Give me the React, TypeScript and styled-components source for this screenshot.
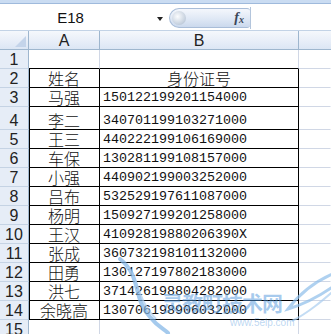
import React from "react";
import styled, { createGlobalStyle } from "styled-components";

const GlobalStyle = createGlobalStyle`
  html, body {
    margin: 0;
    padding: 0;
    background: #ffffff;
  }
  body {
    font-family: "Liberation Sans", Arial, sans-serif;
    overflow: hidden;
  }
`;

type Person = { name: string; id: string };

const people: Person[] = [
  { name: "马强", id: "150122199201154000" },
  { name: "李二", id: "340701199103271000" },
  { name: "王三", id: "440222199106169000" },
  { name: "车保", id: "130281199108157000" },
  { name: "小强", id: "440902199003252000" },
  { name: "吕布", id: "532529197611087000" },
  { name: "杨明", id: "150927199201258000" },
  { name: "王汉", id: "41092819880206390X" },
  { name: "张成", id: "360732198101132000" },
  { name: "田勇", id: "130127197802183000" },
  { name: "洪七", id: "371426198804282000" },
  { name: "余晓高", id: "130706198906032000" },
];

// row heights, row 4 is a bit taller as in the sheet
const rowHeight = (n: number) => (n === 4 ? 23 : 19);

const App: React.FC = () => {
  const rows: { n: number; name?: string; id?: string; boxed: boolean; top: boolean }[] = [];
  rows.push({ n: 1, boxed: false, top: true });
  rows.push({ n: 2, name: "姓名", id: "身份证号", boxed: true, top: false });
  people.forEach((p, i) => rows.push({ n: i + 3, name: p.name, id: p.id, boxed: true, top: false }));
  rows.push({ n: 15, boxed: false, top: false });

  return (
    <Window>
      <GlobalStyle />
      <RibbonEdge />
      <FormulaBar>
        <NameBox>
          <NameText>E18</NameText>
          <DropArrow />
        </NameBox>
        <FxButton>
          <FxKnob />
          <FxLabel>
            f<sub>x</sub>
          </FxLabel>
        </FxButton>
        <FormulaInput />
      </FormulaBar>
      <BarGap />
      <Sheet>
        <Corner>
          <CornerTriangle />
        </Corner>
        <ColHeader>A</ColHeader>
        <ColHeader>B</ColHeader>
        <ColHeader $last />
        {rows.map((r) => (
          <React.Fragment key={r.n}>
            <RowHeader style={{ height: rowHeight(r.n) }}>{r.n}</RowHeader>
            <Cell $boxed={r.boxed} $top={r.top} $left $align="center">
              {r.name && <NameValue>{r.name}</NameValue>}
            </Cell>
            <Cell $boxed={r.boxed} $top={r.top} $align={r.n === 2 ? "center" : "left"}>
              {r.id &&
                (r.n === 2 ? <NameValue>{r.id}</NameValue> : <IdValue>{r.id}</IdValue>)}
            </Cell>
            <Cell $last />
          </React.Fragment>
        ))}
        <Watermark>
          <svg width="230" height="80" viewBox="0 0 230 80">
            <path
              d="M8 2 C 30 20, 20 40, 38 60 C 46 70, 52 72, 56 76"
              fill="none"
              stroke="#7fb4e6"
              strokeWidth="4"
              strokeLinecap="round"
              opacity="0.7"
            />
            <path
              d="M16 10 C 28 26, 26 44, 44 62"
              fill="none"
              stroke="#a9cdef"
              strokeWidth="2"
              opacity="0.7"
            />
            <path
              d="M228 14 C 206 22, 188 36, 176 52 C 196 46, 210 38, 226 26"
              fill="none"
              stroke="#8dbde9"
              strokeWidth="3"
              opacity="0.7"
            />
            <path
              d="M226 30 C 210 44, 196 56, 180 64"
              fill="none"
              stroke="#a9cdef"
              strokeWidth="2"
              opacity="0.7"
            />
          </svg>
          <WatermarkText>灵教町技术网</WatermarkText>
          <WatermarkUrl>www.5elp.com</WatermarkUrl>
        </Watermark>
      </Sheet>
    </Window>
  );
};

export default App;

const Window = styled.div`
  width: 331px;
  height: 334px;
  overflow: hidden;
  background: #ffffff;
`;

const RibbonEdge = styled.div`
  height: 3px;
  background: #cadcf2;
  border-bottom: 1px solid #9fbadc;
`;

const FormulaBar = styled.div`
  display: flex;
  align-items: center;
  height: 25px;
  background: #ffffff;
  padding-top: 1px;
`;

const NameBox = styled.div`
  position: relative;
  width: 169px;
  height: 22px;
  display: flex;
  align-items: center;
  justify-content: center;
`;

const NameText = styled.span`
  font-size: 15px;
  color: #111;
  margin-left: -28px;
`;

const DropArrow = styled.span`
  position: absolute;
  right: 6px;
  top: 10px;
  width: 0;
  height: 0;
  border-left: 3px solid transparent;
  border-right: 3px solid transparent;
  border-top: 4px solid #222;
`;

const FxButton = styled.div`
  position: relative;
  width: 81px;
  height: 20px;
  border-radius: 10px 3px 3px 10px;
  border: 1px solid #a9bdd8;
  border-right: none;
  background: linear-gradient(#f4f7fc, #dfe8f5 55%, #cbd9ed);
  box-sizing: border-box;
  display: flex;
  align-items: center;
  justify-content: flex-end;
  padding-right: 6px;
`;

const FxKnob = styled.span`
  position: absolute;
  left: 2px;
  top: 2px;
  width: 14px;
  height: 14px;
  border-radius: 50%;
  background: radial-gradient(circle at 40% 40%, #ffffff, #c8d2de 60%, #9fb0c4);
  opacity: 0.85;
`;

const FxLabel = styled.span`
  font-family: "Liberation Serif", "Times New Roman", serif;
  font-style: italic;
  font-weight: 700;
  font-size: 14px;
  color: #3a4658;
  sub {
    font-size: 10px;
    vertical-align: -1px;
  }
`;

const FormulaInput = styled.div`
  flex: 1;
  height: 22px;
  border-left: 1px solid #b3c5dc;
  background: #ffffff;
`;

const BarGap = styled.div`
  height: 1px;
  background: #c3d3e6;
`;

const Sheet = styled.div`
  position: relative;
  display: grid;
  grid-template-columns: 29px 71px 199px 32px;
  grid-auto-rows: auto;
`;

const headerBg = "linear-gradient(#f5f8fc, #e8eef8 55%, #dce6f4)";

const Corner = styled.div`
  position: relative;
  height: 19px;
  box-sizing: border-box;
  background: ${headerBg};
  border-right: 1px solid #9eb6ce;
  border-bottom: 1px solid #9eb6ce;
`;

const CornerTriangle = styled.span`
  position: absolute;
  right: 2px;
  bottom: 2px;
  width: 0;
  height: 0;
  border-left: 11px solid transparent;
  border-bottom: 11px solid #c4d4ea;
`;

const ColHeader = styled.div<{ $last?: boolean }>`
  height: 19px;
  box-sizing: border-box;
  background: ${headerBg};
  border-right: ${(p) => (p.$last ? "none" : "1px solid #9eb6ce")};
  border-bottom: 1px solid #9eb6ce;
  display: flex;
  align-items: center;
  justify-content: center;
  font-size: 16px;
  color: #222;
  padding-top: 1px;
`;

const RowHeader = styled.div`
  box-sizing: border-box;
  background: #e6edf7;
  border-right: 1px solid #9eb6ce;
  border-bottom: 1px solid #c5d3e4;
  display: flex;
  align-items: flex-end;
  justify-content: center;
  font-size: 16px;
  line-height: 17px;
  color: #222;
`;

const Cell = styled.div<{
  $boxed?: boolean;
  $top?: boolean;
  $left?: boolean;
  $last?: boolean;
  $align?: "left" | "center";
}>`
  box-sizing: border-box;
  background: #ffffff;
  border-right: 1px solid
    ${(p) => (p.$boxed ? "#000" : p.$last ? "transparent" : "#d0d7e5")};
  border-bottom: 1px solid ${(p) => (p.$boxed || p.$top ? "#000" : "#d0d7e5")};
  box-shadow: ${(p) => (p.$boxed && p.$left ? "inset 1px 0 0 #000" : "none")};
  display: flex;
  align-items: flex-end;
  justify-content: ${(p) => (p.$align === "center" ? "center" : "flex-start")};
  padding-left: ${(p) => (p.$align === "left" ? "3px" : "0")};
  padding-bottom: 1px;
  white-space: nowrap;
`;

const NameValue = styled.span`
  display: block;
  font-family: "Noto Sans CJK SC", "Noto Sans", sans-serif;
  font-weight: 300;
  font-size: 16px;
  line-height: 16px;
  color: #111;
`;

const IdValue = styled.span`
  display: block;
  font-family: "Liberation Mono", "Courier New", monospace;
  font-size: 13.33px;
  line-height: 15px;
  color: #111;
`;

const Watermark = styled.div`
  position: absolute;
  left: 112px;
  top: 226px;
  width: 220px;
  height: 80px;
  pointer-events: none;
  svg {
    position: absolute;
    left: 0;
    top: 0;
  }
`;

const WatermarkText = styled.span`
  position: absolute;
  left: 50px;
  top: 30px;
  font-family: "Noto Sans CJK SC", sans-serif;
  font-size: 21px;
  font-weight: 700;
  letter-spacing: -1px;
  color: rgba(80, 150, 220, 0.5);
`;

const WatermarkUrl = styled.span`
  position: absolute;
  left: 118px;
  top: 60px;
  font-family: "Liberation Sans", sans-serif;
  font-size: 10px;
  color: rgba(80, 150, 220, 0.4);
`;
